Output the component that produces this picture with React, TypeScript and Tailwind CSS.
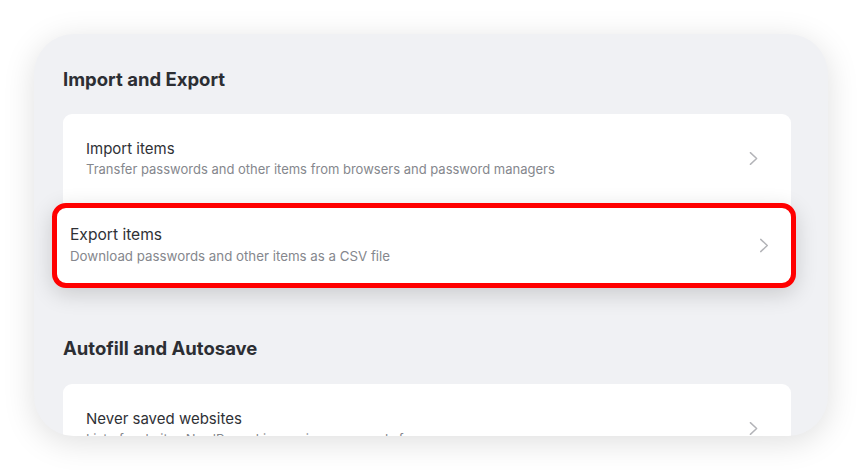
const Chevron = ({ className = '' }: { className?: string }) => (
  <svg
    viewBox="0 0 10 16"
    className={className}
    fill="none"
    stroke="#b3b4b8"
    strokeWidth={1.6}
    strokeLinecap="round"
    strokeLinejoin="round"
  >
    <path d="M1.5 1.5 L8.5 8 L1.5 14.5" />
  </svg>
);

const Row = ({ title, subtitle }: { title: string; subtitle: string }) => (
  <div className="flex h-[89px] items-center justify-between pl-[23px] pr-[33px]">
    <div className="flex flex-col">
      <span className="text-[15px] leading-[21px] text-[#2f3136]">{title}</span>
      <span className="text-[13px] leading-[20px] text-[#85878d]">{subtitle}</span>
    </div>
    <Chevron className="h-[15px] w-[9px]" />
  </div>
);

export default function App() {
  return (
    <div
      className="h-[470px] w-[862px] bg-white pl-[34px] pt-[34px]"
      style={{ fontFamily: 'Inter, "Noto Sans", sans-serif' }}
    >
      <div className="h-[402px] w-[794px] overflow-hidden rounded-[40px] bg-[#f0f1f4] pl-[29px] pr-[37px] pt-[33px] shadow-[0_6px_32px_rgba(0,0,0,0.13)]">
        <h2 className="text-[18.5px] font-bold leading-[24px] text-[#2c2e33]">Import and Export</h2>

        <div className="mt-[23px] flex flex-col rounded-[9px] bg-white">
          <Row
            title="Import items"
            subtitle="Transfer passwords and other items from browsers and password managers"
          />
          {/* highlighted row, pulled out a little past the card */}
          <div className="relative -ml-[11px] -mr-[5px] flex h-[85px] items-center justify-between rounded-[14px] border-[5px] border-[#ff0000] bg-white pl-[13px] pr-[22px] shadow-[0_6px_22px_rgba(0,0,0,0.16)]">
            <div className="flex flex-col">
              <span className="text-[15.6px] leading-[22px] text-[#2f3136]">Export items</span>
              <span className="text-[13.3px] leading-[21px] text-[#85878d]">
                Download passwords and other items as a CSV file
              </span>
            </div>
            <Chevron className="h-[15px] w-[10px]" />
          </div>
        </div>

        <h2 className="mt-[48px] text-[18.5px] font-bold leading-[24px] text-[#2c2e33]">
          Autofill and Autosave
        </h2>

        <div className="mt-[24px] flex flex-col rounded-[9px] bg-white">
          <Row
            title="Never saved websites"
            subtitle="List of websites NordPass skips saving passwords for"
          />
        </div>
      </div>
    </div>
  );
}
